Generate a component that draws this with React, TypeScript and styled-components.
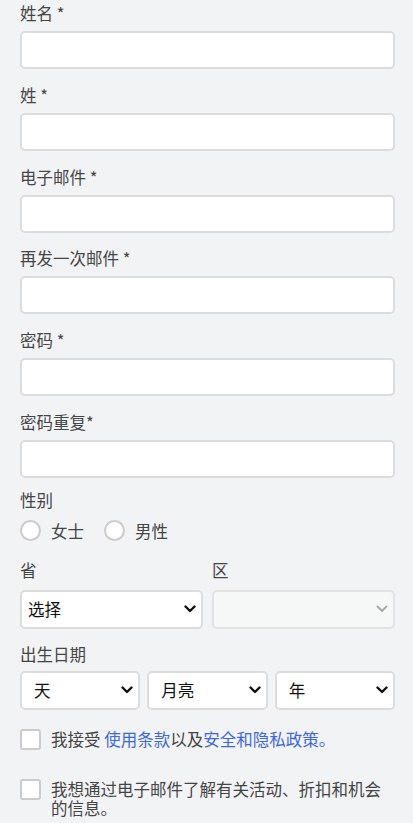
import React, { useState } from 'react';
import styled, { createGlobalStyle } from 'styled-components';

const GlobalStyle = createGlobalStyle`
  html, body {
    margin: 0;
    padding: 0;
    background: #f2f3f5;
  }
  body {
    font-family: "Noto Sans CJK SC", "Noto Sans", sans-serif;
    color: #444;
  }
  * { box-sizing: border-box; }
`

const Chevron = ({ muted }: { muted?: boolean }) => (
  <svg width='12' height='8' viewBox='0 0 12 8' fill='none'>
    <path d='M1.5 1.5 L6 6 L10.5 1.5' stroke={muted ? '#a8a8a8' : '#111'}
      strokeWidth={muted ? 1.8 : 2.4} strokeLinecap='round' strokeLinejoin='round' />
  </svg>
)

const App = () => {
  const [gender, setGender] = useState('')
  const [terms, setTerms] = useState(false)
  const [news, setNews] = useState(false)

  const fields = ['姓名 *', '姓 *', '电子邮件 *', '再发一次邮件 *', '密码 *', '密码重复*']

  return (
    <>
      <GlobalStyle />
      <Form onSubmit={e => e.preventDefault()}>
        {fields.map((f, i) => (
          <Field key={i}>
            <Label>{f}</Label>
            <TextInput type={f.startsWith('密码') ? 'password' : 'text'} />
          </Field>
        ))}

        <Field $gap={10} $bottom={18} style={{ marginTop: -4 }}>
          <Label>性别</Label>
          <RadioRow>
            <RadioItem>
              <Radio type='radio' name='gender' checked={gender === 'f'} onChange={() => setGender('f')} />
              <span>女士</span>
            </RadioItem>
            <RadioItem>
              <Radio type='radio' name='gender' checked={gender === 'm'} onChange={() => setGender('m')} />
              <span>男性</span>
            </RadioItem>
          </RadioRow>
        </Field>

        <TwoCols>
          <Field $gap={10} $bottom={0}>
            <Label>省</Label>
            <SelectWrap>
              <Select defaultValue=''>
                <option value=''>选择</option>
              </Select>
              <Arrow><Chevron /></Arrow>
            </SelectWrap>
          </Field>
          <Field $gap={10} $bottom={0}>
            <Label>区</Label>
            <SelectWrap>
              <Select disabled defaultValue=''>
                <option value=''></option>
              </Select>
              <Arrow><Chevron muted /></Arrow>
            </SelectWrap>
          </Field>
        </TwoCols>

        <Field $gap={7} $bottom={19} style={{ marginTop: 15 }}>
          <Label>出生日期</Label>
          <ThreeCols>
            {['天', '月亮', '年'].map(t => (
              <SelectWrap key={t}>
                <Select $indent={12} defaultValue=''>
                  <option value=''>{t}</option>
                </Select>
                <Arrow><Chevron /></Arrow>
              </SelectWrap>
            ))}
          </ThreeCols>
        </Field>

        <CheckRow $bottom={29}>
          <Check type='checkbox' checked={terms} onChange={e => setTerms(e.target.checked)} />
          <CheckText>
            我接受 <Link href='#'>使用条款</Link>以及<Link href='#'>安全和隐私政策。</Link>
          </CheckText>
        </CheckRow>
        <CheckRow $bottom={0}>
          <Check type='checkbox' checked={news} onChange={e => setNews(e.target.checked)} />
          <CheckText>我想通过电子邮件了解有关活动、折扣和机会的信息。</CheckText>
        </CheckRow>
      </Form>
    </>
  )
}

const Form = styled.form`
  display: flex;
  flex-direction: column;
  padding: 3px 18px 20px 20px;
`
const Field = styled.div<{ $gap?: number, $bottom?: number }>`
  display: flex;
  flex-direction: column;
  gap: ${p => p.$gap ?? 8}px;
  margin-bottom: ${p => p.$bottom ?? 15.8}px;
`
const Label = styled.label`
  font-size: 16.5px;
  line-height: 20px;
  color: #454545;
`
const TextInput = styled.input`
  height: 38px;
  width: 100%;
  border: 2px solid #dcdcdc;
  border-radius: 5px;
  background: #fff;
  padding: 0 10px;
  font: inherit;
  font-size: 16px;
  &:focus { outline: none; border-color: #b9c6e8; }
`
const RadioRow = styled.div`
  display: flex;
  align-items: center;
  gap: 20px;
  height: 22px;
`
const RadioItem = styled.label`
  display: flex;
  align-items: center;
  gap: 10px;
  font-size: 16.5px;
  color: #444;
  cursor: pointer;
`
const Radio = styled.input`
  appearance: none;
  margin: 0;
  width: 21px;
  height: 21px;
  border-radius: 50%;
  border: 2px solid #cbcbcb;
  background: #fff;
  &:checked { box-shadow: inset 0 0 0 4px #fff; background: #3f6bd8; }
`
const TwoCols = styled.div`
  display: grid;
  grid-template-columns: 1fr 1fr;
  gap: 9px;
`
const ThreeCols = styled.div`
  display: grid;
  grid-template-columns: 1fr 1fr 1fr;
  gap: 7px;
`
const SelectWrap = styled.div`
  position: relative;
`
const Select = styled.select<{ $indent?: number }>`
  appearance: none;
  width: 100%;
  height: 39px;
  border: 2px solid #dcdcdc;
  border-radius: 5px;
  background: #fff;
  padding: 0 24px 0 ${p => p.$indent ?? 6}px;
  font-family: "Noto Sans CJK SC", sans-serif;
  font-size: 16.5px;
  color: #111;
  &:disabled { background: #f8f9f9; }
  &:focus { outline: none; }
`
const Arrow = styled.span`
  position: absolute;
  right: 7px;
  top: 50%;
  transform: translateY(-50%);
  display: flex;
  pointer-events: none;
`
const CheckRow = styled.label<{ $bottom: number }>`
  display: flex;
  align-items: flex-start;
  gap: 10px;
  margin-bottom: ${p => p.$bottom}px;
  cursor: pointer;
`
const Check = styled.input`
  appearance: none;
  flex: none;
  margin: 0;
  width: 21px;
  height: 21px;
  border-radius: 3px;
  border: 2px solid #cbcbcb;
  background: #fff;
  &:checked { background: #3f6bd8; border-color: #3f6bd8; }
`
const CheckText = styled.span`
  font-size: 16.5px;
  line-height: 19px;
  margin-top: 1px;
  color: #444;
`
const Link = styled.a`
  color: #4169d4;
  text-decoration: none;
`

export default App
